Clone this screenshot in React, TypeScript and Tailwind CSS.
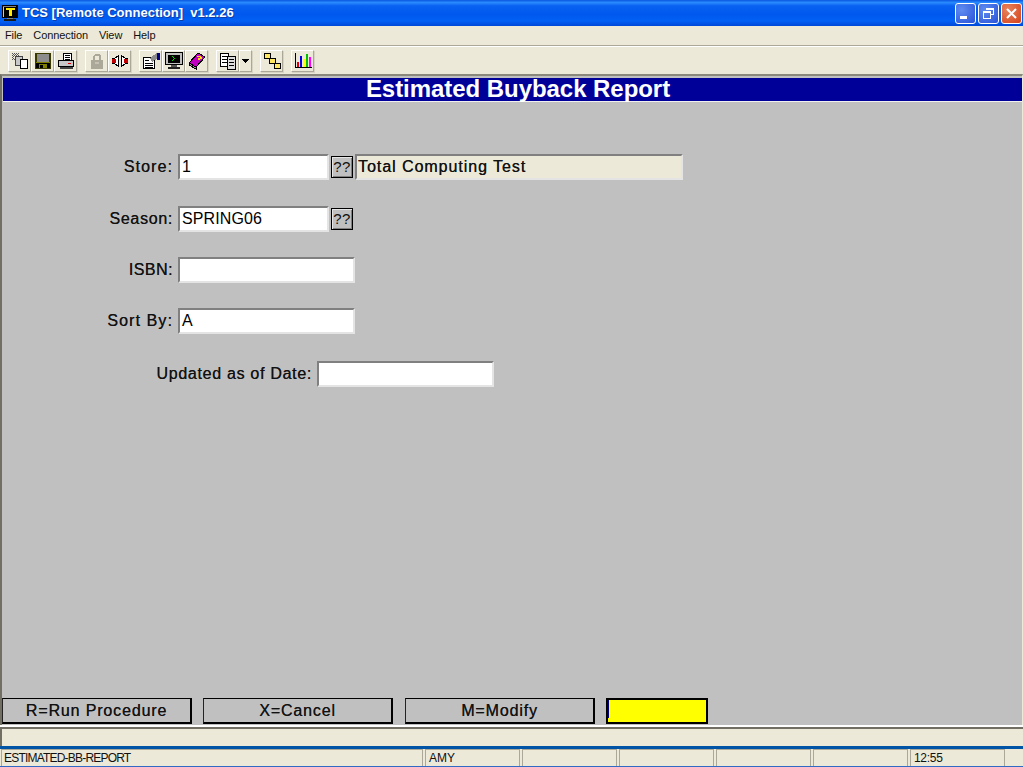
import type { ReactNode } from 'react';

const ui = "font-['Liberation_Sans',Arial,sans-serif]";

function ToolButton({ children, w = 'w-[23px]', ml = 'ml-0' }: { children: ReactNode; w?: string; ml?: string }) {
  return (
    <div className={`${w} ${ml} flex h-[22px] items-center justify-center border border-t-white border-l-white border-r-[#aca899] border-b-[#aca899] bg-[#ece9d8] shadow-[1px_1px_0_#d8d4c4]`}>
      {children}
    </div>
  );
}

function Icon({ children }: { children: ReactNode }) {
  return (
    <svg width="18" height="18" viewBox="0 0 18 18" shapeRendering="crispEdges">
      {children}
    </svg>
  );
}

function Field({ w, value = '' }: { w: string; value?: string }) {
  return (
    <div className={`${w} flex h-[26px] items-center border-2 border-t-[#808080] border-l-[#808080] border-r-[#e4e4e4] border-b-[#e4e4e4] bg-white pl-[2px] text-[16px] tracking-[0.1px] text-black`}>
      {value}
    </div>
  );
}

function Lookup() {
  return (
    <div className="ml-[2px] flex h-[22px] w-[22px] items-center justify-center border border-black bg-[#c0c0c0] text-[15px] tracking-[0.3px] text-[#111] shadow-[inset_1px_1px_0_#e6e6e6,inset_-1px_-1px_0_#808080]">
      ??
    </div>
  );
}

function FormRow({
  label,
  labelW,
  mt = 'mt-0',
  tracking = 'tracking-[0.7px]',
  children,
}: {
  label: string;
  labelW: string;
  mt?: string;
  tracking?: string;
  children: ReactNode;
}) {
  return (
    <div className={`${mt} flex h-[26px] items-center`}>
      <div className={`${labelW} ${tracking} pr-[5px] text-right text-[16px] text-[#111] [text-shadow:0.2px_0_0_#333]`}>{label}</div>
      {children}
    </div>
  );
}

function ActionButton({ label, ml = 'ml-0' }: { label: string; ml?: string }) {
  return (
    <div className={`${ml} flex h-[26px] w-[190px] items-center justify-center border border-black border-r-2 border-b-2 border-l-[#222] bg-[#c0c0c0] text-[16px] tracking-[0.85px] text-[#111] [text-shadow:0.2px_0_0_#333]`}>
      {label}
    </div>
  );
}

function WinButton({ children, bg }: { children: ReactNode; bg: string }) {
  return (
    <div className={`${bg} flex h-[21px] w-[21px] items-center justify-center rounded-[3px] border border-white`}>
      {children}
    </div>
  );
}

function StatusCell({ w, tracking = 'tracking-normal', pl = 'pl-[3px]', children }: { w: string; tracking?: string; pl?: string; children?: ReactNode }) {
  return (
    <div className={`${w} ${tracking} ${pl} flex items-center border-t border-l border-r border-t-[#aca899] border-l-[#aca899] border-r-[#aca899]`}>
      {children}
    </div>
  );
}

export default function App() {
  return (
    <div className={`${ui} flex h-[767px] w-[1023px] flex-col overflow-hidden bg-[#ece9d8]`}>
      {/* Title bar */}
      <div className="flex h-[26px] items-center bg-[linear-gradient(180deg,#0a57e0_0%,#2a8bff_10%,#0a62f2_22%,#0058ee_55%,#0261f5_80%,#0048d8_100%)] pl-[2px] pr-[1px]">
        <svg width="16" height="16" viewBox="0 0 16 16" shapeRendering="crispEdges">
          <rect x="0" y="0" width="16" height="13" fill="#000" />
          <rect x="1" y="1" width="1" height="11" fill="#c8c8c8" />
          <rect x="1" y="1" width="13" height="1" fill="#808080" />
          <path d="M4 3h9v2h-3v6H7V5H4z" fill="#ffe800" />
          <rect x="5" y="13" width="6" height="1" fill="#808080" />
          <rect x="2" y="14" width="12" height="2" fill="#1a1a1a" />
        </svg>
        <div className="ml-[4px] text-[13px] font-bold tracking-[0px] whitespace-pre text-white [text-shadow:1px_1px_0_#0a3ea8]">
          TCS [Remote Connection]  v1.2.26
        </div>
        <div className="ml-auto flex gap-[2px]">
          <WinButton bg="bg-[radial-gradient(circle_at_30%_30%,#5f8cf0,#2a52d8)]">
            <div className="mt-[9px] mr-[5px] h-[3px] w-[7px] bg-white" />
          </WinButton>
          <WinButton bg="bg-[radial-gradient(circle_at_30%_30%,#5f8cf0,#2a52d8)]">
            <svg width="13" height="13" viewBox="0 0 13 13" shapeRendering="crispEdges" fill="none" stroke="#fff">
              <path d="M4.500 3V1.500h7v6H9" />
              <path d="M1.500 4.500h7v6.500h-7z" />
              <path d="M1.500 5.500h7M4.500 2.500h7" />
            </svg>
          </WinButton>
          <WinButton bg="bg-[radial-gradient(circle_at_30%_30%,#e8835c,#d5431a)]">
            <svg width="13" height="13" viewBox="0 0 13 13" fill="none" stroke="#fff" strokeWidth="2">
              <path d="M2 2l9 9M11 2l-9 9" />
            </svg>
          </WinButton>
        </div>
      </div>

      {/* Menu */}
      <div className="flex h-[19px] items-center gap-[11px] pl-[5px] text-[11px] tracking-[-0.1px] text-[#111]">
        <span>File</span>
        <span>Connection</span>
        <span>View</span>
        <span>Help</span>
      </div>
      <div className="h-[1px] bg-[#aca899]" />
      <div className="h-[1px] bg-white" />

      {/* Toolbar */}
      <div className="flex h-[27px] items-center pl-[8px]">
        <ToolButton>
          <Icon>
            <path d="M1 1h1v1H1zM3 1h1v1H3zM5 1h1v1H5zM7 1h1v1H7zM2 2h1v1H2zM4 2h1v1H4zM6 2h1v1H6zM1 3h1v1H1zM3 3h1v1H3zM5 3h1v1H5zM7 3h1v1H7zM2 4h1v1H2zM1 5h1v1H1zM2 6h1v1H2zM1 7h1v1H1zM3 7h1v1H3z" fill="#555" />
            <rect x="4.500" y="4.500" width="7" height="9" fill="#c8c8c8" stroke="#444" />
            <rect x="9.500" y="7.500" width="7" height="9" fill="#fff" stroke="#000" />
          </Icon>
        </ToolButton>
        <ToolButton>
          <Icon>
            <rect x="1" y="1" width="16" height="16" fill="#3a3a00" />
            <rect x="3" y="2" width="12" height="8" fill="#8c8c8c" />
            <rect x="2" y="10" width="14" height="1" fill="#808000" />
            <rect x="2" y="11" width="14" height="5" fill="#000" />
            <rect x="5" y="12" width="8" height="4" fill="#808000" />
            <rect x="6" y="13" width="3" height="3" fill="#000" />
          </Icon>
        </ToolButton>
        <ToolButton>
          <Icon>
            <rect x="6.500" y="1.500" width="8" height="8" fill="#fff" stroke="#000" />
            <rect x="1.500" y="8.500" width="15" height="6" fill="#c8c8c8" stroke="#000" />
            <rect x="3" y="15" width="13" height="2" fill="#444" />
            <rect x="11" y="11" width="3" height="1" fill="#e00000" />
            <path d="M8 3h5v1H8zM8 5h5v1H8zM8 7h5v1H8z" fill="#000" />
          </Icon>
        </ToolButton>
        <ToolButton ml="ml-[8px]">
          <Icon>
            <path d="M5 8V4l2-2h4l2 2v4h-2V4H7v4z" fill="#aca899" />
            <rect x="3" y="8" width="12" height="9" fill="#aca899" />
            <rect x="7" y="10" width="4" height="2" fill="#c4c1b2" />
          </Icon>
        </ToolButton>
        <ToolButton>
          <Icon>
            <path d="M1.500 6.500h2l4-3v11l-4-3h-2z" fill="#fff" stroke="#000" />
            <path d="M16.500 6.500h-2l-4-3v11l4-3h2z" fill="#fff" stroke="#000" />
            <rect x="1" y="7" width="4" height="4" fill="#c00000" />
            <rect x="13" y="7" width="4" height="4" fill="#c00000" />
          </Icon>
        </ToolButton>
        <ToolButton ml="ml-[8px]">
          <Icon>
            <rect x="1.500" y="5.500" width="11" height="11" fill="#fff" stroke="#000" />
            <path d="M3 8h4v1H3zM3 11h8v1H3zM3 13h8v1H3zM3 15h8v1H3z" fill="#000" />
            <path d="M8 6l7-5v6l-5 3z" fill="#8c8c8c" />
            <rect x="15" y="1" width="3" height="7" fill="#000080" />
          </Icon>
        </ToolButton>
        <ToolButton>
          <Icon>
            <rect x="0.500" y="0.500" width="17" height="12" fill="#c0c0c0" stroke="#000" />
            <rect x="3" y="3" width="12" height="8" fill="#000" />
            <path d="M7 4h1v1h1v1h1v1H9v1H8v1H7V8h1V7h1V6H8V5H7z" fill="#00e000" />
            <rect x="6" y="13" width="6" height="2" fill="#555" />
            <rect x="3" y="15" width="12" height="2" fill="#222" />
          </Icon>
        </ToolButton>
        <ToolButton>
          <Icon>
            <path d="M10 1l7 4-9 10-7-4z" fill="#c000c0" stroke="#000" />
            <path d="M1 11l7 4v2l-7-4z" fill="#999" stroke="#000" />
            <path d="M9 4h4v1h1v2h-2v1h-2V6h2V5H9z" fill="#ffe000" />
          </Icon>
        </ToolButton>
        <ToolButton ml="ml-[8px]">
          <Icon>
            <rect x="1.500" y="1.500" width="8" height="13" fill="#fff" stroke="#000" />
            <rect x="8.500" y="4.500" width="8" height="13" fill="#ddd" stroke="#000" />
            <path d="M3 4h5v1H3zM3 7h5v1H3zM3 10h5v1H3zM10 7h5v1h-5zM10 10h5v1h-5zM10 13h5v1h-5z" fill="#000" />
          </Icon>
        </ToolButton>
        <ToolButton w="w-[13px]">
          <svg width="7" height="4" viewBox="0 0 7 4" shapeRendering="crispEdges">
            <path d="M0 0h7v1H6v1H5v1H4v1H3V3H2V2H1V1H0z" fill="#000" />
          </svg>
        </ToolButton>
        <ToolButton ml="ml-[8px]">
          <Icon>
            <path d="M4 4l5 5 5 5" stroke="#000" fill="none" />
            <rect x="1.500" y="1.500" width="6" height="5" fill="#ffe860" stroke="#000" />
            <rect x="6.500" y="6.500" width="6" height="5" fill="#ffe860" stroke="#000" />
            <rect x="11.500" y="11.500" width="6" height="5" fill="#ffe860" stroke="#000" />
          </Icon>
        </ToolButton>
        <ToolButton ml="ml-[8px]">
          <Icon>
            <rect x="1" y="1" width="1" height="15" fill="#000" />
            <rect x="1" y="15" width="17" height="1" fill="#000" />
            <rect x="3" y="10" width="2" height="5" fill="#e00000" />
            <rect x="6" y="4" width="2" height="11" fill="#0000e0" />
            <rect x="9" y="7" width="2" height="8" fill="#ffff00" />
            <rect x="12" y="2" width="2" height="13" fill="#00c000" />
            <rect x="15" y="5" width="2" height="10" fill="#ff00ff" />
          </Icon>
        </ToolButton>
      </div>

      {/* Main panel */}
      <div className="flex min-h-0 flex-1 flex-col border-t-2 border-r border-l-2 border-t-[#8a887c] border-r-[#ece9d8] border-l-[#716f64] bg-[#c0c0c0]">
        <div className="mt-[2px] ml-[1px] flex h-[24px] items-center justify-center border-b border-b-[#f0f0f0] bg-[#000099] pb-[1px] pl-[11px] text-[24px] font-bold tracking-[-0.05px] text-white">
          Estimated Buyback Report
        </div>

        <div className="mt-[52px] flex flex-col">
          <FormRow label="Store:" labelW="w-[176px]" tracking="tracking-[1.1px]">
            <Field w="w-[151px]" value="1" />
            <Lookup />
            <div className="ml-[2px] flex h-[26px] w-[328px] items-center border-2 border-t-[#808080] border-l-[#808080] border-r-[#e4e4e4] border-b-[#e4e4e4] bg-[#ece9d8] pl-[1px] text-[16px] tracking-[0.95px] text-[#111] [text-shadow:0.2px_0_0_#333]">
              Total Computing Test
            </div>
          </FormRow>
          <FormRow label="Season:" labelW="w-[176px]" mt="mt-[26px]">
            <Field w="w-[151px]" value="SPRING06" />
            <Lookup />
          </FormRow>
          <FormRow label="ISBN:" labelW="w-[176px]" mt="mt-[25px]" tracking="tracking-[0.5px]">
            <Field w="w-[177px]" />
          </FormRow>
          <FormRow label="Sort By:" labelW="w-[176px]" mt="mt-[25px]" tracking="tracking-[1.1px]">
            <Field w="w-[177px]" value="A" />
          </FormRow>
          <FormRow label="Updated as of Date:" labelW="w-[315px]" mt="mt-[27px]">
            <Field w="w-[177px]" />
          </FormRow>
        </div>

        <div className="mt-auto flex items-center gap-[11px] pb-[1px]">
          <ActionButton label="R=Run Procedure" />
          <ActionButton label="X=Cancel" />
          <ActionButton label="M=Modify" ml="ml-[1px]" />
          <div className="flex h-[26px] w-[102px] items-start border-2 border-black bg-[#ffff00]">
            <div className="h-[18px] w-[1px] bg-[#000080]" />
          </div>
        </div>
      </div>

      {/* Lower strip */}
      <div className="h-[2px] bg-white" />
      <div className="h-[2px] bg-[#716f64]" />
      <div className="h-[17px] border-l-2 border-l-[#716f64]" />
      <div className="h-[3px] bg-[#0054a6]" />

      {/* Status bar */}
      <div className="flex h-[18px] gap-[2px] border-b-[1px] border-b-[#316ac5] pl-[1px] text-[12px] text-[#111]">
        <StatusCell w="w-[422px]" tracking="tracking-[-0.8px]" pl="pl-[2px]">ESTIMATED-BB-REPORT</StatusCell>
        <StatusCell w="w-[95px]">AMY</StatusCell>
        <StatusCell w="w-[95px]" />
        <StatusCell w="w-[95px]" />
        <StatusCell w="w-[95px]" />
        <StatusCell w="w-[95px]" />
        <StatusCell w="w-[95px]" tracking="tracking-[-0.3px]">12:55</StatusCell>
      </div>
    </div>
  );
}
